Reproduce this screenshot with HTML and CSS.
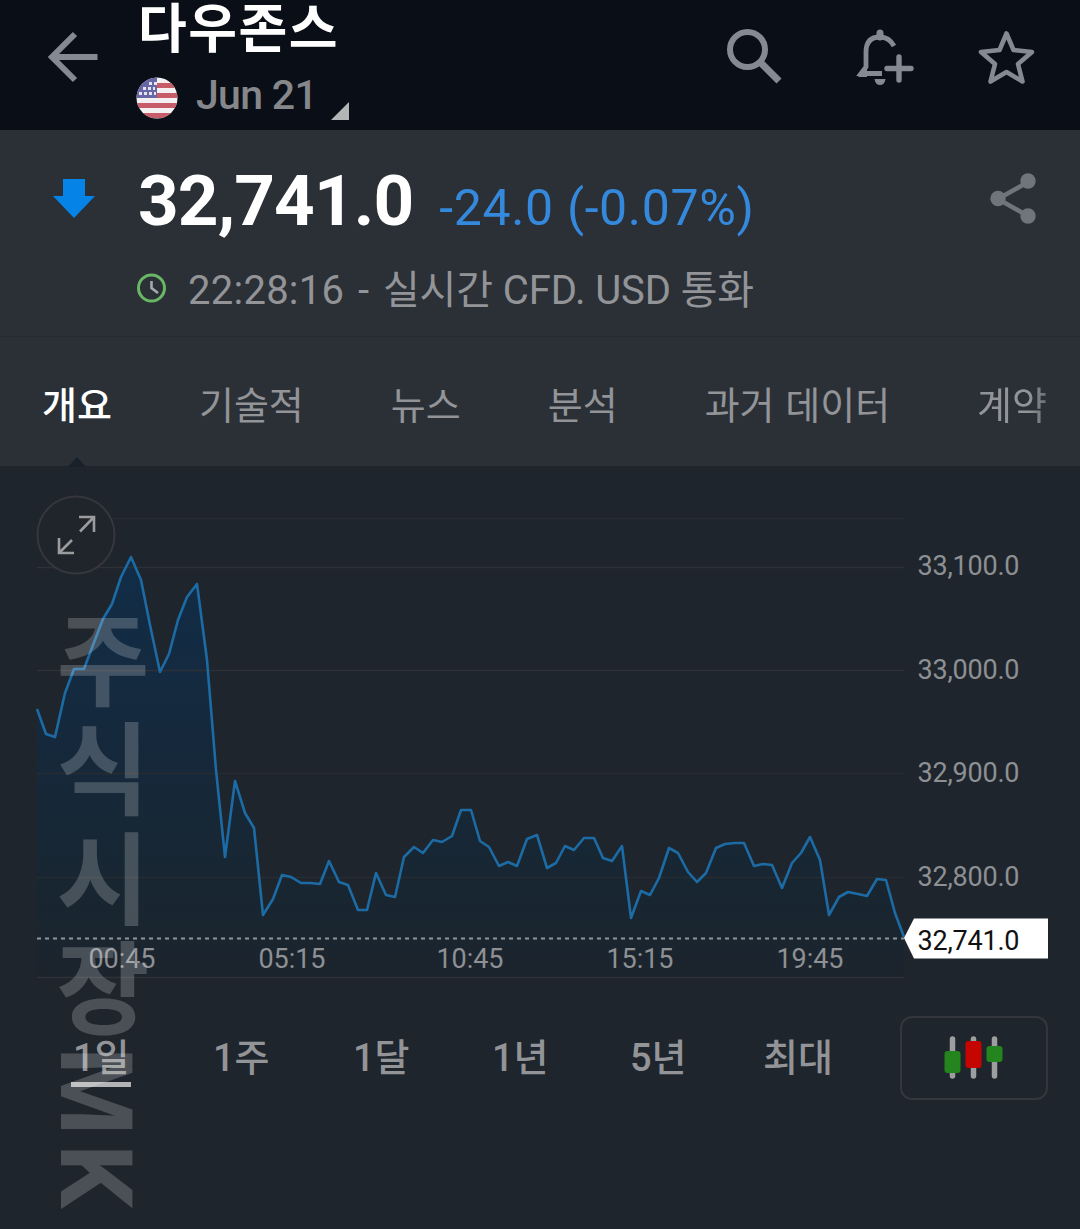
FILE: index.html
```html
<!DOCTYPE html>
<html lang="ko">
<head>
<meta charset="utf-8">
<title>다우존스</title>
<link rel="stylesheet" href="styles.css">
</head>
<body>
<div class="app">
  <header class="topbar">
    <svg class="back" width="52" height="52" viewBox="0 0 52 52"><path d="M51.500 26H6M29 3L6 26l23 23" fill="none" stroke="#858a92" stroke-width="6"/></svg>
    <div class="heading">
      <h1 class="title">다우존스</h1>
      <div class="subtitle">
        <svg class="flag" width="42" height="42" viewBox="0 0 42 42">
          <defs><clipPath id="disc"><circle cx="21" cy="21" r="20.5"/></clipPath></defs>
          <g clip-path="url(#disc)">
            <rect width="42" height="42" fill="#f4f1f3"/>
            <path d="M0 8.500h42M0 18.500h42M0 28.500h42M0 38.500h42" stroke="#c75d68" stroke-width="4.800"/>
            <rect width="21" height="21" fill="#6667a4"/>
            <path d="M13 6.500h8M7 11.500h12M3 16.500h17" stroke="#e4e4f2" stroke-width="3" stroke-dasharray="3 2"/>
          </g>
        </svg>
        <span class="contract">Jun 21</span>
        <svg class="corner" width="18" height="18" viewBox="0 0 18 18"><path d="M18 0v18H0z" fill="#b4b5b7"/></svg>
      </div>
    </div>
    <nav class="actions">
      <svg width="60" height="60" viewBox="0 0 60 60" fill="none" stroke="#858a92"><circle cx="23.500" cy="22.500" r="17.500" stroke-width="6"/><path d="M37 36L55 54" stroke-width="7"/></svg>
      <svg class="bell" width="60" height="60" viewBox="0 0 60 60" fill="none" stroke="#858a92">
        <path d="M38 19Q33 10 24 10Q10 10 10 25V40L5 46.500H26" stroke-width="4.800"/>
        <path d="M2 50L11 38V50z" fill="#858a92" stroke="none"/>
        <path d="M24 10V6" stroke-width="7" stroke-linecap="round"/>
        <path d="M18.500 52h11q-1 6-5.500 6t-5.500-6z" fill="#858a92" stroke="none"/>
        <path d="M43 30v23M31 41.500h24" stroke-width="5.400" stroke-linecap="round"/>
      </svg>
      <svg width="60" height="60" viewBox="0 0 60 60"><path d="M30.500 6.500L37.500 23L56 25L42 37L46.500 54.500L30.500 45L14.500 54.500L19 37L5 25L23.500 23z" fill="none" stroke="#858a92" stroke-width="4.600" stroke-linejoin="round"/></svg>
    </nav>
  </header>

  <section class="quote">
    <svg class="trend" width="42" height="40" viewBox="0 0 42 40"><path d="M10 0h22v17h10L21 39L0 17h10z" fill="#0583e6"/></svg>
    <div class="figures">
      <div class="price-row">
        <span class="price">32,741.0</span>
        <span class="change">-24.0 (-0.07%)</span>
      </div>
      <div class="status">
        <svg width="30" height="30" viewBox="0 0 30 30" fill="none"><circle cx="14.500" cy="15" r="13" stroke="#69b765" stroke-width="3"/><path d="M14.500 8v7l6.500 5" stroke="#a5a9ac" stroke-width="2.600"/></svg>
        <span class="status-text"><span class="time">22:28:16 - </span>실시간 CFD. USD 통화</span>
      </div>
    </div>
    <svg class="share" width="46" height="52" viewBox="0 0 46 52" fill="#70747b"><path d="M38 9L8 26L38 43" fill="none" stroke="#70747b" stroke-width="4.500"/><circle cx="38" cy="8" r="7.700"/><circle cx="8" cy="25.500" r="7.700"/><circle cx="38" cy="43" r="7.700"/></svg>
  </section>

  <nav class="tabs">
    <span class="tab tab-active">개요</span>
    <span class="tab">기술적</span>
    <span class="tab">뉴스</span>
    <span class="tab">분석</span>
    <span class="tab">과거 데이터</span>
    <span class="tab tab-fade">계약</span>
  </nav>

  <svg class="chart" width="1080" height="534" viewBox="0 466 1080 534">
    <defs>
      <linearGradient id="area" gradientUnits="userSpaceOnUse" x1="0" y1="556" x2="0" y2="977">
        <stop offset="0" stop-color="#112d47"/><stop offset=".4" stop-color="#15293d"/><stop offset=".8" stop-color="#182631"/><stop offset="1" stop-color="#1c242d"/>
      </linearGradient>
    </defs>
    <path d="M37 710L46 734L55 737L65 693L74 669L84 669L93 645L103 619L112 604L121 577L131 556L141 580L150 625L160 672L169 654L178 620L187 597L197 584L207 660L216 770L225 857L235 781L245 813L254 828L263 916L273 899L282 875L291 877L301 883L310 883L320 884L329 861L339 882L348 885L358 910L367 910L376 873L386 895L395 897L404 857L414 847L423 853L433 840L442 842L452 836L461 810L471 810L480 841L489 847L499 866L508 862L517 866L527 839L537 835L547 868L556 863L565 846L574 850L584 838L594 838L603 858L612 861L622 846L631 918L641 891L650 895L659 878L669 848L678 853L688 872L697 882L706 873L716 848L725 844L735 843L744 843L754 866L763 864L772 865L782 888L792 863L801 853L810 837L820 860L829 915L839 897L848 892L858 894L867 896L877 879L886 880L895 913L904 937V977H37Z" fill="url(#area)"/>
    <path class="grid" d="M37 567.500H904M37 670.500H904M37 977.500H904"/>
    <path class="grid grid-faint" d="M37 518.500H904M37 773.500H904M37 877.500H904"/>
    <path class="now" d="M37 938.500H904"/>
    <path class="line" d="M37 709L46 734L55 737L65 693L74 669L84 669L93 645L103 619L112 604L121 577L131 557L141 580L150 625L160 672L169 654L178 620L187 597L197 584L207 660L216 770L225 857L235 781L245 813L254 828L263 915L273 899L282 875L291 877L301 883L310 883L320 884L329 861L339 882L348 885L358 910L367 910L376 873L386 895L395 897L404 857L414 847L423 853L433 840L442 842L452 836L461 810L471 810L480 841L489 847L499 866L508 862L517 866L527 839L537 835L547 868L556 863L565 846L574 850L584 838L594 838L603 858L612 861L622 846L631 918L641 891L650 895L659 878L669 848L678 853L688 872L697 882L706 873L716 848L725 844L735 843L744 843L754 866L763 864L772 865L782 888L792 863L801 853L810 837L820 860L829 915L839 897L848 892L858 894L867 896L877 879L886 880L895 913L904 937"/>
    <path d="M68 467L77 457L86 467z" fill="#18202a"/>
    <circle cx="76" cy="535" r="38.500" fill="#20242b" stroke="#35363e" stroke-width="2"/>
    <path d="M79 517H94V532M93 518L80 531.500M59 538V553H74M60 552L72 540" fill="none" stroke="#9b9c9d" stroke-width="2.600"/>
    <path d="M904 938L914 918.500H1048V958.500H914Z" fill="#fff"/>
    <g class="axis">
      <text x="917.500" y="575" textLength="102">33,100.0</text>
      <text x="917.500" y="679" textLength="102">33,000.0</text>
      <text x="917.500" y="782" textLength="102">32,900.0</text>
      <text x="917.500" y="885.500" textLength="102">32,800.0</text>
      <text x="917.500" y="950" textLength="102" class="last">32,741.0</text>
    </g>
    <g class="axis hours">
      <text x="88.500" y="968" textLength="67">00:45</text>
      <text x="258.500" y="968" textLength="67">05:15</text>
      <text x="436.500" y="968" textLength="67">10:45</text>
      <text x="606.500" y="968" textLength="67">15:15</text>
      <text x="776.500" y="968" textLength="67">19:45</text>
    </g>
  </svg>

  <div class="ranges">
    <span class="range range-active">1일</span>
    <span class="range">1주</span>
    <span class="range">1달</span>
    <span class="range">1년</span>
    <span class="range">5년</span>
    <span class="range">최대</span>
    <div class="candles">
      <svg width="60" height="44" viewBox="0 0 60 44">
        <path d="M8.500 3v37M29.500 3v37M50.500 3v37" stroke="#9d9ea0" stroke-width="5.500" stroke-linecap="round"/>
        <rect x=".5" y="15" width="16" height="22" rx="3" fill="#24841d"/>
        <rect x="21.500" y="5" width="16" height="27" rx="3" fill="#c40500"/>
        <rect x="42.500" y="10" width="16" height="16" rx="3" fill="#24841d"/>
      </svg>
    </div>
  </div>
  <div class="watermark">주식시장<span class="latin">MK</span></div>
</div>
</body>
</html>
```
FILE: styles.css
```css
* { box-sizing: border-box; }
body { margin: 0; background: #1f252c; }
.app {
  position: relative;
  width: 1080px;
  height: 1229px;
  overflow: hidden;
  background: #1f252c;
  color: #929497;
  font-family: Roboto, "Noto Sans CJK KR", sans-serif;
}
.topbar { display: flex; height: 130px; background: #0a0e16; padding-left: 46px; }
.back { flex: none; margin-top: 31px; }
.heading { width: 361px; padding-left: 38px; }
.title {
  margin: 0 0 0 2px;
  height: 72px;
  font-size: 53px;
  line-height: 60px;
  letter-spacing: 1.5px;
  font-weight: 700;
  color: #fff;
  white-space: nowrap;
}
.subtitle { display: flex; height: 50px; align-items: center; }
.flag { flex: none; margin-top: 2px; }
.contract { width: 119px; margin-left: 18px; font-size: 41px; line-height: 48px; letter-spacing: -.7px; font-weight: 500; color: #85878a; margin-top: -4px; white-space: nowrap; }
.corner { flex: none; margin-left: 16px; align-self: flex-end; margin-bottom: 2px; }
.actions { display: flex; gap: 66px; margin-left: 265px; padding-top: 27px; }
.bell { margin: 0 -6px 0 6px; }

.quote { display: flex; height: 207px; background: #2b3037; padding-left: 53px; border-bottom: 1px solid #252a31; }
.trend { flex: none; margin-top: 49px; }
.figures { width: 895px; padding-left: 43px; }
.price-row { display: flex; align-items: baseline; height: 134px; padding-top: 29px; white-space: nowrap; }
.price { font-size: 71px; line-height: 84px; letter-spacing: -.9px; font-weight: 700; color: #fff; }
.change { margin-left: 26px; font-size: 50px; letter-spacing: .65px; color: #3589dc; }
.status { display: flex; align-items: center; height: 48px; margin-left: -1px; }
.status-text { margin: 5px 0 0 21px; font-size: 40px; line-height: 48px; letter-spacing: -.1px; white-space: nowrap; }
.time { letter-spacing: .25px; word-spacing: 3.5px; }
.share { flex: none; margin-top: 43px; }

.tabs {
  display: flex;
  gap: 87px;
  height: 129px;
  padding: 38px 0 0 42px;
  background: #2b3037;
  font-family: "Noto Sans CJK KR", sans-serif;
  font-size: 38px;
  line-height: 56px;
  white-space: nowrap;
}
.tab-active { color: #fff; font-weight: 500; }
.tab-fade { -webkit-mask-image: linear-gradient(90deg, #000 75%, rgba(0,0,0,.6)); mask-image: linear-gradient(90deg, #000 75%, rgba(0,0,0,.6)); }

.chart { display: block; overflow: visible; }
.grid { fill: none; stroke: #2d3239; stroke-width: 1.500; }
.grid-faint { stroke: #272c33; }
.now { fill: none; stroke: #90969b; stroke-width: 2; stroke-dasharray: 4 4; }
.line { fill: none; stroke: #1c6ba5; stroke-width: 2.600; stroke-linejoin: round; }
.axis { font-size: 27px; fill: #8e9093; }
.axis .last { fill: #111; }

.ranges {
  display: grid;
  grid-template-columns: 140px 140px 139px 138px 133px 139px 148px;
  padding: 16px 0 0 71px;
  font-size: 38px;
  line-height: 50px;
  font-weight: 500;
}
.range { justify-self: start; height: 54px; margin-top: 17px; padding-left: 2px; white-space: nowrap; }
.range-active { width: 60px; border-bottom: 5px solid #b2b3b5; }
.candles {
  display: flex;
  align-items: center;
  justify-content: center;
  height: 84px;
  border: 2px solid #34363d;
  border-radius: 12px;
}
.watermark {
  position: absolute;
  left: 53px;
  top: 609px;
  writing-mode: vertical-rl;
  font-family: "Noto Sans CJK KR", sans-serif;
  font-size: 101px;
  line-height: 99px;
  letter-spacing: 8.500px;
  font-weight: 700;
  color: rgba(255, 255, 255, .2);
  white-space: nowrap;
}
.latin { display: inline-block; transform: translateX(-8px); font-family: Roboto, sans-serif; }
```
